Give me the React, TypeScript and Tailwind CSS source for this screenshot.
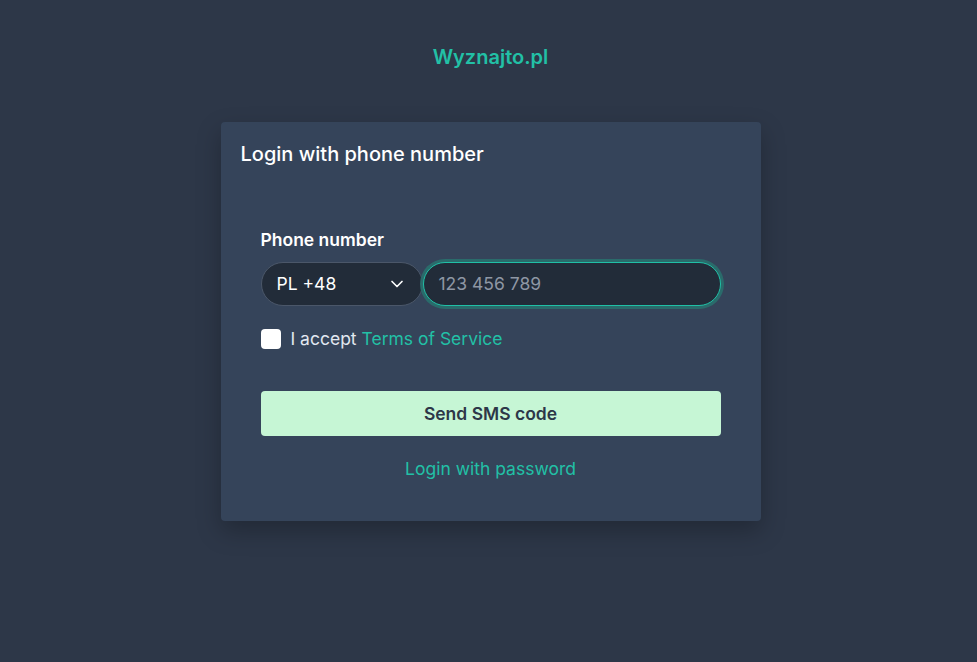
import { ChevronDown } from 'lucide-react';

export default function App() {
  return (
    <div
      className="min-h-[662px] w-full bg-[#2d3748] flex flex-col items-center pl-[4px]"
      style={{ fontFamily: 'Inter, "Noto Sans", sans-serif' }}
    >
      {/* Brand */}
      <div className="mt-[43px] h-[28px] text-[20px] leading-[28px] font-semibold text-[#22c0a6]">
        Wyznajto.pl
      </div>

      {/* Card */}
      <div className="mt-[51px] w-[540px] bg-[#35445a] rounded-[4px] shadow-[0_10px_25px_rgba(0,0,0,0.25)] pb-[40px]">
        <h1 className="px-5 pt-[18px] text-[20px] leading-[28px] font-medium text-white">
          Login with phone number
        </h1>

        <div className="px-10 mt-[60px]">
          <label className="block text-[17.5px] leading-[24px] font-semibold text-white">
            Phone number
          </label>
          <div className="mt-[10px] flex">
            <div className="w-[162px] h-[44px] rounded-full bg-[#222c39] border border-[#4b5769] flex items-center justify-between pl-[15px] pr-[15px] text-white text-[17.5px]">
              <span>PL +48</span>
              <ChevronDown className="w-[20px] h-[20px] text-white" strokeWidth={2} />
            </div>
            <div className="flex-1 h-[44px] rounded-full bg-[#222c39] border border-[#20c0a6] ring-[3px] ring-[#2a6b6b] flex items-center px-[15px] text-[17.5px] text-[#8e97a4]">
              123 456 789
            </div>
          </div>

          <div className="mt-[21px] flex items-center gap-[10px]">
            <div className="w-[20px] h-[20px] rounded-[4px] bg-white" />
            <span className="text-[17.5px] leading-[24px] text-[#e2e8f0]">
              I accept <span className="text-[#22c0a6]">Terms of Service</span>
            </span>
          </div>

          <button
            type="button"
            className="mt-[40px] w-full h-[45px] pt-[2px] rounded-[4px] bg-[#c6f6d5] text-[#2d3748] text-[17.5px] font-semibold"
          >
            Send SMS code
          </button>

          <div className="mt-[21px] text-center text-[17.5px] leading-[24px] text-[#22c0a6]">
            Login with password
          </div>
        </div>
      </div>
    </div>
  );
}
